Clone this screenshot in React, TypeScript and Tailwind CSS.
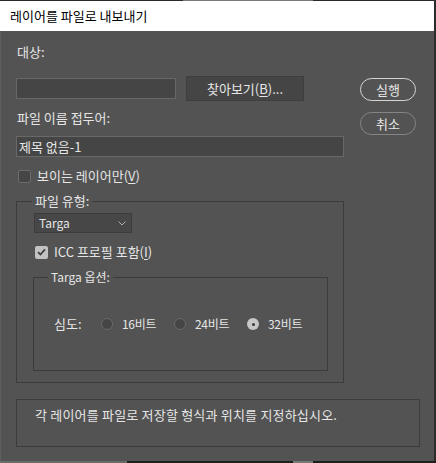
import React from "react";

const font = { fontFamily: '"Noto Sans CJK KR", "Noto Sans", sans-serif' };

function Check({ checked, label }: { checked?: boolean; label: React.ReactNode }) {
  return (
    <div className="flex h-[14px] items-center">
      {checked ? (
        <span className="flex h-[13px] w-[13px] items-center justify-center rounded-[2px] bg-[#c2c2c2]">
          <svg width="9" height="8" viewBox="0 0 9 8">
            <path d="M1 4.2 L3.4 6.5 L8 1.3" fill="none" stroke="#3f3f3f" strokeWidth="1.8" />
          </svg>
        </span>
      ) : (
        <span className="h-[13px] w-[13px] rounded-[2px] border border-[#6c6c6c] bg-[#464646]" />
      )}
      <span className="ml-[6px] leading-[16px]">{label}</span>
    </div>
  );
}

function Radio({ checked, label }: { checked?: boolean; label: string }) {
  return (
    <div className="flex w-[73px] items-center">
      {checked ? (
        <span className="flex h-[12px] w-[12px] items-center justify-center rounded-full bg-[#c8c8c8]">
          <span className="h-[3px] w-[3px] rounded-full bg-[#3a3a3a]" />
        </span>
      ) : (
        <span className="h-[12px] w-[12px] rounded-full border border-[#6a6a6a] bg-[#454545]" />
      )}
      <span className="ml-[9px] text-[12px] leading-[16px] tracking-[-0.3px]">{label}</span>
    </div>
  );
}

export default function App() {
  return (
    <div className="flex h-[463px] w-[436px] flex-col overflow-hidden text-[13px] text-[#e6e6e6]" style={font}>
      <div className="flex h-[1px] shrink-0">
        <div className="w-[183px] bg-[#2a2a2a]" />
        <div className="w-[130px] bg-[#7a7a7a]" />
        <div className="flex-1 bg-[#2a2a2a]" />
      </div>
      <div className="flex flex-1">
        <div className="flex flex-1 flex-col">
          <div className="flex h-[30px] shrink-0 items-center bg-white pl-[10px] text-black">
            <span className="leading-[16px]">레이어를 파일로 내보내기</span>
          </div>
          <div className="flex flex-1 flex-col border-l border-[#5f5f5f] bg-[#535353] pl-[15px]">
            <div className="flex">
              <div className="flex w-[328px] flex-col">
                <div className="mt-[13px] pl-[1px] leading-[16px]">대상:</div>
                <div className="mt-[16px] flex items-start">
                  <div className="mt-[2px] h-[21px] w-[160px] border border-[#686868] bg-[#454545]" />
                  <button className="ml-[10px] flex h-[25px] w-[118px] items-center justify-center border border-[#3e3e3e] bg-[#454545] leading-[16px]">
                    찾아보기(<u className="underline-offset-2">B</u>)...
                  </button>
                </div>
                <div className="mt-[9px] pl-[1px] leading-[16px]">파일 이름 접두어:</div>
                <div className="mt-[10px] flex h-[21px] items-center border border-[#686868] bg-[#454545] pl-[2px] leading-[16px]">
                  제목 없음-1
                </div>
                <div className="mt-[12px] pl-[2px]">
                  <Check label={<>보이는 레이어만(<u className="underline-offset-2">V</u>)</>} />
                </div>
                <fieldset className="mt-[10px] border border-[#3c3c3c] pb-[11px]">
                  <legend className="ml-[15px] px-[3px] leading-[16px]">파일 유형:</legend>
                  <div className="ml-[17px] mt-[4px] flex h-[20px] w-[98px] items-center justify-between border border-[#3c3c3c] bg-[#474747] pl-[4px] pr-[5px]">
                    <span className="text-[12px] leading-[16px]">Targa</span>
                    <svg width="8" height="5" viewBox="0 0 8 5">
                      <path d="M0.5 0.5 L4 4 L7.5 0.5" fill="none" stroke="#b0b0b0" strokeWidth="1" />
                    </svg>
                  </div>
                  <div className="ml-[18px] mt-[12px]">
                    <Check checked label={<>ICC 프로필 포함(<u className="underline-offset-2">I</u>)</>} />
                  </div>
                  <fieldset className="ml-[16px] mt-[10px] w-[295px] border border-[#3c3c3c] pb-[39px]">
                    <legend className="ml-[14px] px-[3px] text-[12px] leading-[16px]">Targa 옵션:</legend>
                    <div className="mt-[32px] flex h-[14px] items-center pl-[20px]">
                      <span className="w-[47px] leading-[16px]">심도:</span>
                      <Radio label="16비트" />
                      <Radio label="24비트" />
                      <Radio checked label="32비트" />
                    </div>
                  </fieldset>
                </fieldset>
              </div>
              <div className="ml-[16px] flex flex-col">
                <button className="mt-[47px] flex h-[23px] w-[56px] items-center justify-center rounded-full border-[1.5px] border-[#d4d4d4] leading-[16px]">
                  실행
                </button>
                <button className="mt-[11px] flex h-[23px] w-[56px] items-center justify-center rounded-full border border-[#858585] leading-[16px]">
                  취소
                </button>
              </div>
            </div>
            <div className="mt-[16px] h-[48px] w-[404px] border border-[#3c3c3c] pl-[18px] pt-[7px] leading-[16px] tracking-[0.2px]">
              각 레이어를 파일로 저장할 형식과 위치를 지정하십시오.
            </div>
          </div>
        </div>
        <div className="w-[2px] bg-[#2b2b2b]" />
      </div>
      <div className="flex h-[2px] shrink-0">
        <div className="w-[127px] bg-[#6a6a6a]" />
        <div className="w-[166px] bg-[#1e1e1e]" />
        <div className="w-[20px] bg-[#787878]" />
        <div className="flex-1 bg-[#1e1e1e]" />
      </div>
    </div>
  );
}
